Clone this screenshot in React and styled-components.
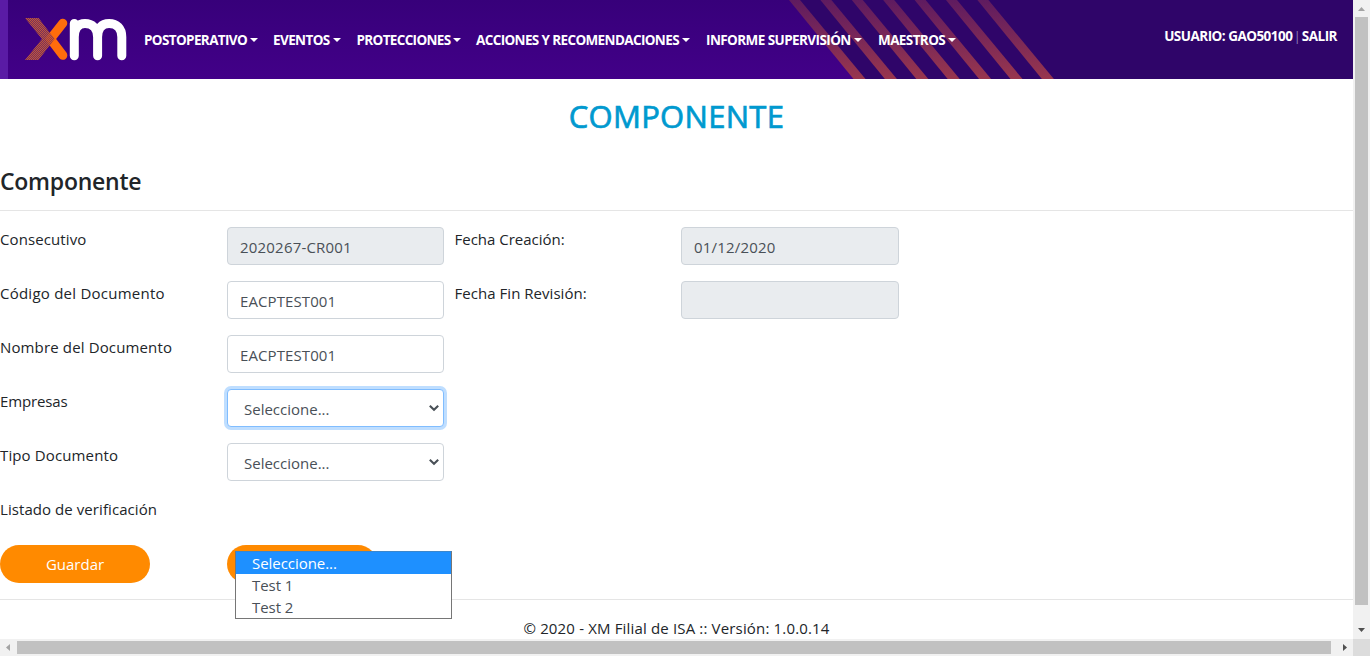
import React from 'react';
import styled, { createGlobalStyle } from 'styled-components';

const GlobalStyle = createGlobalStyle`
  *, *::before, *::after { box-sizing: border-box; }
  html, body { margin: 0; overflow: hidden; background: #fff; }
  body {
    font-family: "Open Sans", "Noto Sans", sans-serif;
    font-size: 15px;
    line-height: 24px;
    color: #212529;
  }
`;

const Window = styled.div`
  display: grid;
  grid-template-columns: minmax(0, 1fr) 17px;
  grid-template-rows: minmax(0, 1fr) 17px;
  width: 1370px;
  height: 656px;
`;

const Page = styled.div`
  position: relative;
  overflow: hidden;
  background: #fff;
`;

const Header = styled.header`
  position: relative;
  display: flex;
  height: 79px;
  padding-left: 25px;
  background: linear-gradient(#37007a, #420088);
`;

const HeaderArt = styled.svg`
  position: absolute;
  inset: 0;
`;

const Logo = styled.svg`
  position: relative;
  flex: none;
  width: 103px;
  height: 44px;
  margin: 17px 16px 0 0;
`;

const Nav = styled.nav`
  position: relative;
  display: flex;
  align-items: center;
  height: 79px;
`;

const NavItem = styled.a`
  display: flex;
  align-items: center;
  flex: none;
  width: ${(p) => p.$width}px;
  color: #fff;
  font-size: 13.5px;
  font-weight: 700;
  white-space: nowrap;
  letter-spacing: ${(p) => p.$spacing}px;

  &::after {
    content: "";
    margin: 0 0 0 3px;
    border: 4px solid transparent;
    border-top-color: #fff;
    border-bottom: 0;
  }
`;

const Session = styled.div`
  position: relative;
  display: flex;
  gap: 1px;
  margin: 24px 16px 0 auto;
  color: #8f7fb8;
  font-size: 13.5px;
  white-space: nowrap;

  b { color: #fff; letter-spacing: -0.52px; }
`;

const Title = styled.h1`
  margin: 18px 0 0;
  color: #0099cf;
  font-size: 31px;
  font-weight: 500;
  line-height: 38px;
  letter-spacing: 0.3px;
  -webkit-text-stroke: 0.7px #0099cf;
  text-align: center;
`;

const Section = styled.h2`
  margin: 32px 0 0;
  padding-bottom: 14px;
  border-bottom: 1px solid #e5e5e5;
  font-size: 23px;
  font-weight: 600;
  line-height: 29px;
  letter-spacing: -0.25px;
`;

const Form = styled.div`
  display: grid;
  grid-template-columns: 227px 217px 237px 218px;
  grid-auto-rows: 38px;
  row-gap: 16px;
  padding-top: 16px;
`;

const Actions = styled.div`
  display: grid;
  grid-template-columns: 227px 217px;
  padding-top: 10px;
`;

const Label = styled.label`
  grid-column: ${(p) => (p.$second ? 3 : 1)};
  padding-left: ${(p) => (p.$second ? 10.5 : 0)}px;
  letter-spacing: ${(p) => p.$spacing || 0}px;
  white-space: nowrap;
`;

const Control = styled.div`
  display: flex;
  align-items: center;
  justify-content: space-between;
  padding: 1px 3px 0 ${(p) => (p.$select ? 16 : 12)}px;
  border: 1px solid ${(p) => (p.$focus ? '#80bdff' : '#ced4da')};
  border-radius: 4px;
  background: ${(p) => (p.$disabled ? '#e9ecef' : '#fff')};
  box-shadow: ${(p) => (p.$focus ? '0 0 0 3px #bfdeff' : 'none')};
  color: #495057;
  letter-spacing: ${(p) => p.$spacing || 0}px;
`;

const Chevron = styled.svg`
  width: 12px;
  height: 8px;
  margin-top: -1px;
`;

const Button = styled.button`
  width: 150px;
  height: 38px;
  padding: 0 0 1px;
  border: 0;
  border-radius: 19px;
  background: #ff8a00;
  color: #fff;
  font: inherit;
`;

const Footer = styled.footer`
  margin-top: 16px;
  padding-top: 16px;
  border-top: 1px solid #e5e5e5;
  text-align: center;
  letter-spacing: 0.16px;
`;

const Menu = styled.div`
  position: absolute;
  left: 235px;
  top: 551px;
  width: 217px;
  height: 68px;
  border: 1px solid #767676;
  border-top-color: #3c87cc;
  background: #fff;
`;

const Option = styled.div`
  height: 22px;
  padding-left: 16px;
  line-height: 23px;
  background: ${(p) => (p.$active ? '#1e90ff' : '#fff')};
  color: ${(p) => (p.$active ? '#fff' : '#495057')};
  letter-spacing: -0.05px;
`;

const ScrollTrack = styled.div`
  display: flex;
  flex-direction: ${(p) => (p.$vertical ? 'column' : 'row')};
  align-items: center;
  background: #f1f1f1;
`;

const ScrollThumb = styled.div`
  flex: none;
  width: ${(p) => p.$w}px;
  height: ${(p) => p.$h}px;
  background: #c1c1c1;
`;

const ScrollArrow = styled.svg`
  flex: none;
  width: 17px;
  height: 17px;
  margin-left: ${(p) => (p.$end === 'x' ? 'auto' : 0)};
  margin-top: ${(p) => (p.$end === 'y' ? 'auto' : 0)};
`;

const Corner = styled.div`
  background: #dcdcdc;
`;

const NAV = [
  ['POSTOPERATIVO', 129, -0.63],
  ['EVENTOS', 83.5, -0.6],
  ['PROTECCIONES', 119.5, -0.66],
  ['ACCIONES Y RECOMENDACIONES', 230, -0.63],
  ['INFORME SUPERVISIÓN', 172, -0.58],
  ['MAESTROS', 90, -0.6],
];

const STRIPES = [789, 820.4, 851.8, 883.2, 914.6, 946, 977.4];

function Arrow() {
  return (
    <Chevron viewBox="0 0 12 8">
      <path d="M1.8 1.8 6 5.8l4.2-4" fill="none" stroke="#495057" strokeWidth="2.1" />
    </Chevron>
  );
}

function HeaderBackground() {
  return (
    <HeaderArt width="1353" height="79">
      <defs>
        <linearGradient id="stripe" gradientUnits="userSpaceOnUse" x1="0" y1="0" x2="0" y2="79">
          <stop offset="0" stopColor="#5f1b60" />
          <stop offset="1" stopColor="#98364e" />
        </linearGradient>
      </defs>
      <path d="M0 0h8v79H0z" fill="#5a1ba5" />
      <path d="M795 0h558v79H859z" fill="#2f0569" />
      {STRIPES.map((x) => (
        <path key={x} d={`M${x} 0h11l65.500 79h-12z`} fill="url(#stripe)" />
      ))}
    </HeaderArt>
  );
}

function XmLogo() {
  return (
    <Logo viewBox="0 0 103 44">
      <defs>
        <pattern id="dots" width="2" height="2" patternUnits="userSpaceOnUse">
          <path d="M0 0h1v1H0zM1 1h1v1H1z" fill="#cf5f38" />
        </pattern>
      </defs>
      <path d="M27 20 37.800 6.200M27 24l10.800 14.300" stroke="#ff6c0c" strokeWidth="9" strokeLinecap="round" fill="none" />
      <path d="M0 1h13.500L29.500 22 13.500 43H0l17-21z" fill="#7a3058" />
      <path d="M0 1h13.500L29.500 22 13.500 43H0l17-21z" fill="url(#dots)" fillOpacity=".8" />
      <path d="M24.500 15.500 29.500 22l-5 6.500L20 22z" fill="#ff6c0c" fillOpacity=".25" />
      <path d="M49.300 38.800V6.500M49.300 20C49.300 11 53.300 6.500 60 6.500S72.600 11 72.600 20v18.800M72.600 20c0-9 4-13.500 11.500-13.500S96.800 11 96.800 20v18.800" fill="none" stroke="#fff" strokeWidth="9" strokeLinecap="round" />
    </Logo>
  );
}

export default function App() {
  return (
    <Window>
      <GlobalStyle />
      <Page>
        <Header>
          <HeaderBackground />
          <XmLogo />
          <Nav>
            {NAV.map(([text, width, spacing]) => (
              <NavItem key={text} $width={width} $spacing={spacing}>{text}</NavItem>
            ))}
          </Nav>
          <Session><b>USUARIO: GAO50100</b>|<b>SALIR</b></Session>
        </Header>
        <Title>COMPONENTE</Title>
        <Section>Componente</Section>
        <Form>
          <Label $spacing={0.1}>Consecutivo</Label>
          <Control $disabled $spacing={0.2}>2020267-CR001</Control>
          <Label $second>Fecha Creación:</Label>
          <Control $disabled $spacing={0.2}>01/12/2020</Control>
          <Label $spacing={0.24}>Código del Documento</Label>
          <Control $spacing={0.1}>EACPTEST001</Control>
          <Label $second $spacing={0.04}>Fecha Fin Revisión:</Label>
          <Control $disabled />
          <Label $spacing={0.14}>Nombre del Documento</Label>
          <Control $spacing={0.1}>EACPTEST001</Control>
          <Label $spacing={-0.15}>Empresas</Label>
          <Control $select $focus>Seleccione...<Arrow /></Control>
          <Label $spacing={0.13}>Tipo Documento</Label>
          <Control $select>Seleccione...<Arrow /></Control>
          <Label $spacing={0.07}>Listado de verificación</Label>
        </Form>
        <Actions>
          <Button>Guardar</Button>
          <Button />
        </Actions>
        <Footer>© 2020 - XM Filial de ISA :: Versión: 1.0.0.14</Footer>
        <Menu>
          <Option $active>Seleccione...</Option>
          <Option>Test 1</Option>
          <Option>Test 2</Option>
        </Menu>
      </Page>
      <ScrollTrack $vertical>
        <ScrollArrow viewBox="0 0 17 17"><path d="M5 11h7L8.500 7z" fill="#a3a3a3" /></ScrollArrow>
        <ScrollThumb $w={13} $h={588} />
        <ScrollArrow $end="y" viewBox="0 0 17 17"><path d="M5 6h7l-3.500 4z" fill="#505050" /></ScrollArrow>
      </ScrollTrack>
      <ScrollTrack>
        <ScrollArrow viewBox="0 0 17 17"><path d="M10 5v7L6 8.500z" fill="#a3a3a3" /></ScrollArrow>
        <ScrollThumb $w={1314} $h={13} />
        <ScrollArrow $end="x" viewBox="0 0 17 17"><path d="M7 5v7l4-3.500z" fill="#505050" /></ScrollArrow>
      </ScrollTrack>
      <Corner />
    </Window>
  );
}
